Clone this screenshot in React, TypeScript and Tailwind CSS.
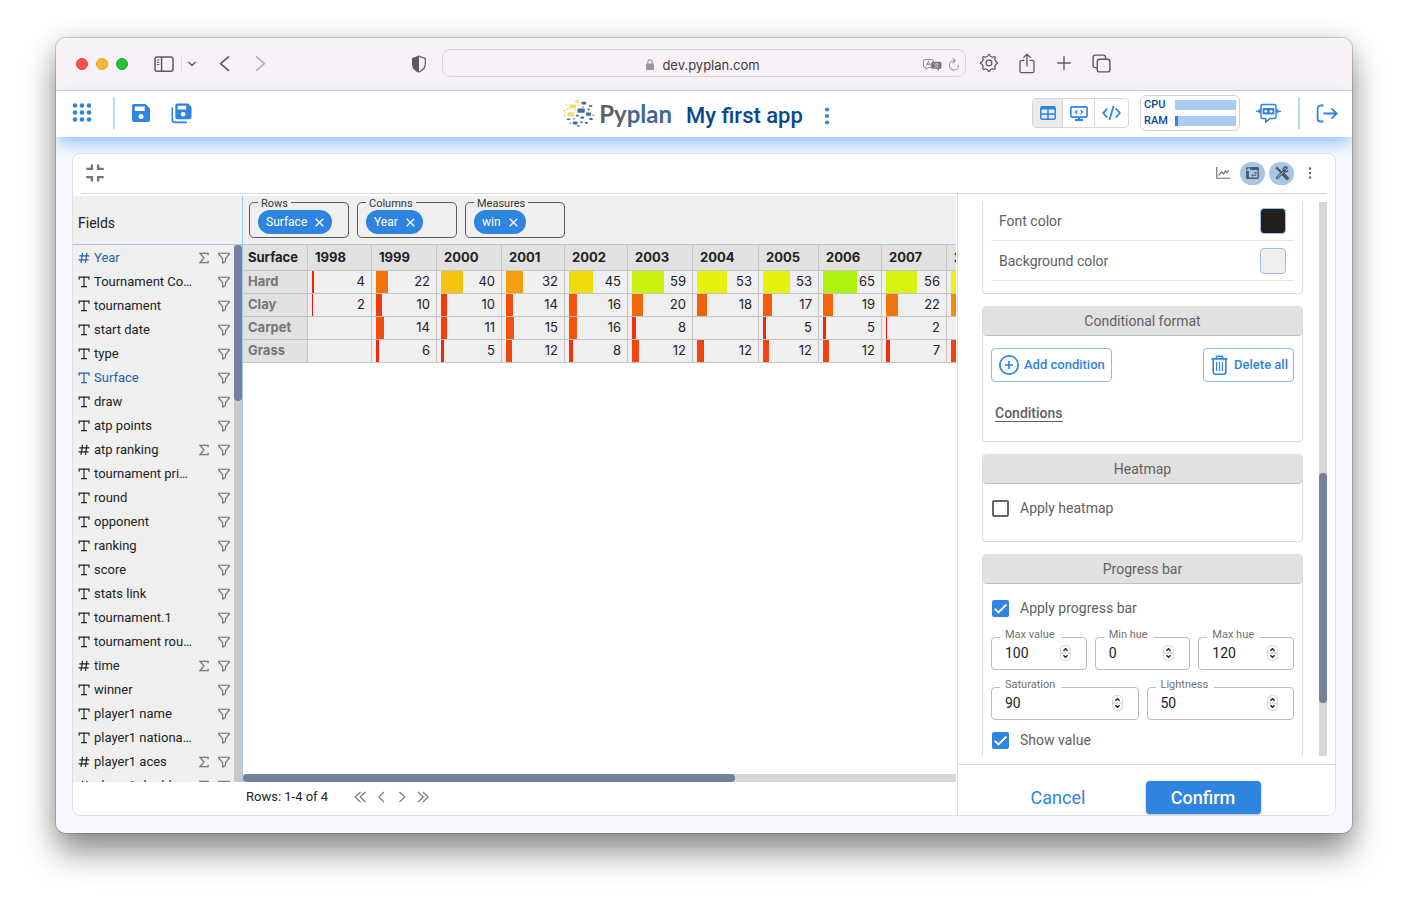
import React from 'react';

const Filter = () => (
  <svg className="h-3 w-3 shrink-0" viewBox="0 0 12 12" fill="none" stroke="#6b6b6b" strokeWidth="1.1" strokeLinejoin="round">
    <path d="M.7 1.2h10.6v.9L7.5 6.6v2.5L4.7 11.2V6.6L.7 2.1z" />
  </svg>
);

const Sigma = () => (
  <svg className="h-3 w-[10px] shrink-0" viewBox="0 0 10 12" fill="none" stroke="#757575" strokeWidth="1.2">
    <path d="M9.2 3.2V1.3H.9L5 6 .9 10.7h8.3V8.8" />
  </svg>
);

const Hash = () => (
  <svg className="h-3 w-3 shrink-0" viewBox="0 0 12 12" fill="none" stroke="currentColor" strokeWidth="1.2">
    <path d="M4.6 .8 3 11M9 .8 7.400 11M1.400 3.800h10M.6 7.900h10" />
  </svg>
);

const TypeT = () => (
  <svg className="h-3 w-3 shrink-0" viewBox="0 0 12 12" fill="none" stroke="currentColor" strokeWidth="1.2">
    <path d="M1.100 3.800V1.100h9.900v2.700M6 1.100v9.500M3 10.600h6" />
  </svg>
);

type Field = { name: string; numeric?: boolean; active?: boolean };

const fields: Field[] = [
  { name: 'Year', numeric: true, active: true },
  { name: 'Tournament Co…' },
  { name: 'tournament' },
  { name: 'start date' },
  { name: 'type' },
  { name: 'Surface', active: true },
  { name: 'draw' },
  { name: 'atp points' },
  { name: 'atp ranking', numeric: true },
  { name: 'tournament pri…' },
  { name: 'round' },
  { name: 'opponent' },
  { name: 'ranking' },
  { name: 'score' },
  { name: 'stats link' },
  { name: 'tournament.1' },
  { name: 'tournament rou…' },
  { name: 'time', numeric: true },
  { name: 'winner' },
  { name: 'player1 name' },
  { name: 'player1 nationa…' },
  { name: 'player1 aces', numeric: true },
  { name: 'player1 doubl…', numeric: true },
];

const years = [1998, 1999, 2000, 2001, 2002, 2003, 2004, 2005, 2006, 2007, 2008];
const colWidths = [65, 64, 65, 65, 63, 63, 65, 66, 60, 63, 65, 65];
const rows: { name: string; values: (number | null)[] }[] = [
  { name: 'Hard', values: [4, 22, 40, 32, 45, 59, 53, 53, 65, 56, 52] },
  { name: 'Clay', values: [2, 10, 10, 14, 16, 20, 18, 17, 19, 22, 28] },
  { name: 'Carpet', values: [null, 14, 11, 15, 16, 8, null, 5, 5, 2, null] },
  { name: 'Grass', values: [null, 6, 5, 12, 8, 12, 12, 12, 12, 7, 12] },
];

function TitleBar() {
  return (
    <div className="flex h-[53px] shrink-0 items-center border-b border-[#d3cdd2] bg-[#f8f1f8] text-[#5f565e]">
      <div className="flex w-[386px] shrink-0 items-center pr-[15px] pl-5">
        <div className="flex gap-2">
          <span className="h-3 w-3 rounded-full border border-[#e0443e] bg-[#ff524c]" />
          <span className="h-3 w-3 rounded-full border border-[#dea123] bg-[#ffb429]" />
          <span className="h-3 w-3 rounded-full border border-[#1aab29] bg-[#26c035]" />
        </div>
        <button aria-label="Sidebar" className="ml-[26px]">
          <svg className="h-4 w-5" viewBox="0 0 20 16" fill="none" stroke="currentColor" strokeWidth="1.5">
            <rect x="1" y=".9" width="18" height="14.3" rx="2" />
            <path d="M7.6 1v14" />
            <path d="M2.8 4h2.6M2.8 6.3h2.6M2.8 8.6h2.6" strokeWidth="1" />
          </svg>
        </button>
        <span className="ml-[7px] h-[18px] w-px bg-[#e5dde5]" />
        <button aria-label="Tab groups" className="ml-[6px]">
          <svg className="h-2 w-2" viewBox="0 0 8 8" fill="none" stroke="currentColor" strokeWidth="1.3" strokeLinecap="round">
            <path d="m.8 2.3 3.2 3.2 3.2-3.2" />
          </svg>
        </button>
        <button aria-label="Back" className="ml-[23px]">
          <svg className="h-4 w-[11px]" viewBox="0 0 11 16" fill="none" stroke="currentColor" strokeWidth="1.6" strokeLinecap="round" strokeLinejoin="round">
            <path d="M9.400 .8 1.600 7.600l7.800 6.800" />
          </svg>
        </button>
        <button aria-label="Forward" className="ml-[25px] text-[#b8b0b7]">
          <svg className="h-4 w-[11px]" viewBox="0 0 11 16" fill="none" stroke="currentColor" strokeWidth="1.6" strokeLinecap="round" strokeLinejoin="round">
            <path d="M1.600 .8 9.400 7.600l-7.800 6.800" />
          </svg>
        </button>
        <button aria-label="Privacy report" className="ml-auto">
          <svg className="h-[18px] w-4" viewBox="0 0 16 18" fill="currentColor">
            <path d="M8 .3C5.600 2 3.400 2.600 1 2.900v6C1 13 3.600 16 8 17.700z" />
            <path d="M8 1c2.200 1.500 4.200 2.100 6.300 2.400V9c0 3.600-2.200 6.300-6.300 8" fill="none" stroke="currentColor" strokeWidth="1.200" />
          </svg>
        </button>
      </div>
      <div className="mb-[2px] flex h-7 flex-1 items-center rounded-lg border border-[#dcd4dc] pt-[3px] pr-[5px] pl-[6px]">
        <span className="w-[34px]" />
        <div className="flex flex-1 items-center justify-center gap-2 font-['Inter',sans-serif] text-[13px] leading-4 text-[#3f393e]">
          <svg className="h-[11px] w-2" viewBox="0 0 8 11">
            <rect x="0" y="4.500" width="8" height="6.500" rx="1" fill="#9b949a" />
            <path d="M1.800 5V3a2.200 2.200 0 0 1 4.400 0v2" fill="none" stroke="#9b949a" strokeWidth="1.100" />
          </svg>
          dev.pyplan.com
        </div>
        <div className="flex items-center gap-[6px]">
          <svg className="h-3 w-[19px]" viewBox="0 0 19 12">
            <path d="M2 .600h6.800a1.500 1.500 0 0 1 1.500 1.500V7a1.500 1.500 0 0 1-1.500 1.500H5L3 10.300V8.500H2A1.500 1.500 0 0 1 .500 7V2.100A1.500 1.500 0 0 1 2 .600z" fill="none" stroke="#8b838a" strokeWidth=".9" />
            <path d="m3.400 6.800 2-4.600 2 4.600M4.100 5.300h2.600" fill="none" stroke="#8b838a" strokeWidth=".9" />
            <path d="M9.700 2.800H17a1.500 1.500 0 0 1 1.500 1.500v4A1.500 1.500 0 0 1 17 9.800h-1v1.900l-2.200-1.900H9.700a1.500 1.500 0 0 1-1.500-1.500v-4a1.500 1.500 0 0 1 1.500-1.500z" fill="#7a7279" />
            <path d="M11 5h5M13.500 3.900v1.200M11.500 8.600c2-.6 3.200-1.800 3.600-3.500M12 5.500c.6 1.600 1.900 2.700 3.500 3.100" fill="none" stroke="#f8f1f8" strokeWidth=".6" />
          </svg>
          <svg className="h-[13px] w-3" viewBox="0 0 12 13" fill="none" stroke="#a39ca2" strokeWidth="1.100" strokeLinecap="round">
            <path d="M6.800 2.700H6A4.600 4.600 0 1 0 10.600 7.400M5 .500l2.400 2.200L5 5" />
          </svg>
        </div>
      </div>
      <div className="flex w-[386px] shrink-0 items-center pb-[2px] pl-[13px]">
        <button aria-label="Settings">
          <svg className="h-5 w-5" viewBox="0 0 24 24" fill="none" stroke="currentColor" strokeWidth="1.500" strokeLinejoin="round">
            <circle cx="12" cy="12" r="3.400" />
            <path d="M10.300 3.900Q12 -.5 13.700 3.900L16.500 5.100Q20.900 3.100 18.900 7.500L20.100 10.300Q24.500 12 20.100 13.700L18.900 16.500Q20.900 20.900 16.500 18.900L13.700 20.100Q12 24.500 10.300 20.100L7.500 18.900Q3.100 20.900 5.100 16.500L3.900 13.700Q-.5 12 3.900 10.300L5.100 7.500Q3.100 3.100 7.500 5.100Z" />
          </svg>
        </button>
        <button aria-label="Share" className="ml-5">
          <svg className="h-[21px] w-4" viewBox="0 0 16 21" fill="none" stroke="currentColor" strokeWidth="1.300" strokeLinecap="round" strokeLinejoin="round">
            <path d="M5 7.300H2.600A1.600 1.600 0 0 0 1 8.900v9.200a1.600 1.600 0 0 0 1.600 1.600h10.800a1.600 1.600 0 0 0 1.600-1.600V8.900a1.600 1.600 0 0 0-1.600-1.600H11M8 13V1.200M4.800 4.200 8 1.100l3.200 3.100" />
          </svg>
        </button>
        <button aria-label="New tab" className="ml-[22px]">
          <svg className="h-[14px] w-[14px]" viewBox="0 0 14 14" fill="none" stroke="currentColor" strokeWidth="1.400" strokeLinecap="round">
            <path d="M7 .800v12.400M.800 7h12.400" />
          </svg>
        </button>
        <button aria-label="Tab overview" className="ml-[21px]">
          <svg className="h-[19px] w-[19px]" viewBox="0 0 19 19" fill="none" stroke="currentColor" strokeWidth="1.400">
            <rect x="5.300" y="5.300" width="12.600" height="12.600" rx="2.200" />
            <path d="M5 13.600H3.300A2.200 2.200 0 0 1 1.100 11.400V3.300a2.200 2.200 0 0 1 2.200-2.200h8.100a2.200 2.200 0 0 1 2.200 2.200V5" />
          </svg>
        </button>
      </div>
    </div>
  );
}

const logoBlocks: [number, number, number, number, string][] = [
  [40, 4, 12, 7, '#f1da66'], [23, 17, 19, 12, '#f1da66'], [10, 16, 8, 4, '#f4e38a'], [13, 28, 8, 5, '#f1da66'],
  [47, 17, 8, 5, '#f1da66'], [2, 33, 10, 5, '#f1da66'], [17, 40, 20, 13, '#f1da66'], [3, 48, 8, 5, '#f4e38a'],
  [37, 31, 7, 5, '#f4e38a'], [59, 8, 14, 9, '#44689b'], [82, 19, 10, 5, '#44689b'], [60, 22, 7, 4, '#7f99bd'],
  [47, 29, 22, 13, '#44689b'], [77, 29, 7, 5, '#44689b'], [42, 48, 9, 5, '#44689b'], [73, 41, 15, 10, '#44689b'],
  [91, 47, 7, 4, '#7f99bd'], [15, 59, 10, 5, '#44689b'], [33, 57, 7, 5, '#7f99bd'], [56, 53, 11, 7, '#44689b'],
  [83, 58, 10, 6, '#44689b'], [33, 68, 14, 9, '#44689b'], [22, 72, 7, 4, '#7f99bd'], [55, 68, 8, 5, '#44689b'],
  [69, 70, 10, 5, '#44689b'], [46, 80, 8, 4, '#44689b'],
];

function AppHeader() {
  return (
    <header className="relative z-10 flex h-[46px] shrink-0 items-center bg-white pr-[18px] pb-[2px] pl-4 text-[#2e84de] shadow-[0_8px_16px_-2px_rgba(120,182,244,0.85)]">
      <div className="flex flex-1 items-center">
        <button aria-label="Applications">
          <svg className="h-5 w-5" viewBox="0 0 20 20" fill="currentColor">
            {[3, 10, 17].map((y) => [3, 10, 17].map((x) => <circle key={`${x}-${y}`} cx={x} cy={y - 0.5} r="2.300" />))}
          </svg>
        </button>
        <span className="ml-[21px] h-8 w-[2px] bg-[#b9dafa]" />
        <button aria-label="Save" className="ml-[17px]">
          <svg className="h-[18px] w-[18px]" viewBox="0 0 18 18">
            <path d="M2 0h11.500L18 4.500V16a2 2 0 0 1-2 2H2a2 2 0 0 1-2-2V2a2 2 0 0 1 2-2z" fill="currentColor" />
            <path d="M2.800 2.600h9.900v4.400H2.800z" fill="#fff" />
            <circle cx="9" cy="12.500" r="2.500" fill="#fff" />
          </svg>
        </button>
        <button aria-label="Save as" className="ml-[21px]">
          <svg className="h-[21px] w-[21px]" viewBox="0 0 21 21">
            <path d="M6.300 .500h11L20.500 4v10.200a2 2 0 0 1-2 2H6.300a2 2 0 0 1-2-2V2.500a2 2 0 0 1 2-2z" fill="currentColor" />
            <path d="M6.700 2.800h8.500v3.600H6.700z" fill="#fff" />
            <circle cx="12.200" cy="11.300" r="2.300" fill="#fff" />
            <path d="M1.300 4.500V17a2.400 2.400 0 0 0 2.400 2.400H16" fill="none" stroke="currentColor" strokeWidth="1.600" />
          </svg>
        </button>
      </div>
      <div className="mr-[14px] flex items-center">
        <svg className="h-[29px] w-[33px]" viewBox="0 0 100 88">
          {logoBlocks.map(([x, y, w, h, c], i) => (
            <rect key={i} x={x} y={y} width={w} height={h} rx="2" fill={c} />
          ))}
        </svg>
        <span className="ml-1 pt-px font-['Lato',sans-serif] text-2xl font-bold text-[#5d5f62]">
          Py<span className="text-[#436795]">plan</span>
        </span>
        <h1 className="ml-[14px] pt-[6px] text-[22px] leading-7 font-medium text-[#06498f]">My first app</h1>
        <button aria-label="Application menu" className="ml-[21px] pt-[5px]">
          <svg className="h-[18px] w-[6px]" viewBox="0 0 6 18" fill="currentColor">
            <circle cx="3" cy="2.500" r="2.100" />
            <circle cx="3" cy="9" r="2.100" />
            <circle cx="3" cy="15.500" r="2.100" />
          </svg>
        </button>
      </div>
      <div className="flex flex-1 items-center justify-end">
        <div className="flex h-[30px] overflow-hidden rounded-[4px] border border-[#d6d6d6]">
          <button aria-label="Table view" className="flex w-[29px] items-center justify-center bg-[#ebebeb]">
            <svg className="h-[14px] w-4" viewBox="0 0 16 14" fill="none" stroke="currentColor" strokeWidth="1.500">
              <rect x=".8" y=".8" width="14.400" height="12.400" rx="1.500" />
              <path d="M1 2.200h14" strokeWidth="2.500" />
              <path d="M1 8h14M8 3v10" />
            </svg>
          </button>
          <button aria-label="Interface view" className="flex w-8 items-center justify-center border-l border-[#d6d6d6]">
            <svg className="h-[15px] w-[18px]" viewBox="0 0 18 15" fill="none" stroke="currentColor" strokeWidth="1.600">
              <rect x=".9" y=".9" width="16.200" height="10.200" rx="1" />
              <path d="M9 11v3M5 14h8" strokeWidth="2" />
              <path d="m7.400 4.200-2 1.900 2 1.900M10.600 4.200l2 1.900-2 1.900" strokeWidth="1.200" />
            </svg>
          </button>
          <button aria-label="Code view" className="flex w-[34px] items-center justify-center border-l border-[#d6d6d6]">
            <svg className="h-4 w-[19px]" viewBox="0 0 19 16" fill="none" stroke="currentColor" strokeWidth="1.800">
              <path d="M5.300 3.500 1.200 8l4.100 4.500M13.700 3.500 17.800 8l-4.100 4.500M11.600 1 7.400 15" />
            </svg>
          </button>
        </div>
        <div className="ml-[11px] flex h-9 w-[100px] flex-col justify-center rounded-md border border-[#cfd1d4] px-[3px] text-[11px] leading-4 font-medium text-[#06498f]">
          <div className="flex items-center justify-between">
            CPU
            <span className="h-[10px] w-[61px] bg-[#a9ccf1]" />
          </div>
          <div className="flex items-center justify-between">
            RAM
            <span className="flex h-[10px] w-[61px] bg-[#a9ccf1]">
              <span className="w-[5%] bg-[#2e84de]" />
            </span>
          </div>
        </div>
        <button aria-label="Assistant" className="ml-4">
          <svg className="h-[21px] w-[25px]" viewBox="0 0 25 21" fill="none" stroke="currentColor">
            <path d="M6.400 1.500h12.200a1.400 1.400 0 0 1 1.400 1.400v11.300a1.400 1.400 0 0 1-1.400 1.400h-4.800l-4 3.600v-3.600H6.400A1.400 1.400 0 0 1 5 14.200V2.900a1.400 1.400 0 0 1 1.400-1.400z" strokeWidth="1.500" strokeLinejoin="round" />
            <rect x="6.600" y="5" width="11.800" height="6.600" rx="1.300" fill="currentColor" stroke="none" />
            <circle cx="9.800" cy="8.300" r="1.400" fill="#fff" stroke="none" />
            <circle cx="15.200" cy="8.300" r="1.400" fill="#fff" stroke="none" />
            <path d="M0 8.300h5M20 8.300h5" strokeWidth="1.300" />
            <path d="M3.300 6.300v4M21.700 6.300v4" strokeWidth="1.500" />
          </svg>
        </button>
        <span className="ml-[17px] h-8 w-[2px] bg-[#b9dafa]" />
        <button aria-label="Log out" className="ml-4 -mr-1">
          <svg className="h-[19px] w-[22px]" viewBox="0 0 22 19" fill="none" stroke="currentColor" strokeWidth="1.800">
            <path d="M7.500 1.500H4.600a3 3 0 0 0-3 3v10a3 3 0 0 0 3 3h2.900M7.500 9.500h13M15.500 4.300l5.200 5.200-5.200 5.200" />
          </svg>
        </button>
      </div>
    </header>
  );
}

function CardToolbar() {
  return (
    <div className="mx-2 flex h-10 shrink-0 items-center border-b border-[#d6d6d6] pr-[15px] pb-px pl-1 text-[#4c5a6a]">
      <button aria-label="Exit full screen">
        <svg className="h-5 w-5" viewBox="0 0 20 20" fill="none" stroke="#757575" strokeWidth="2.400">
          <path d="M6.900 1.400v4.500H1.300M13.100 1.400v4.500h5.600M6.900 18.600v-4.500H1.300M13.100 18.600v-4.500h5.600" />
        </svg>
      </button>
      <button aria-label="Chart" className="ml-auto">
        <svg className="h-3 w-[14px]" viewBox="0 0 14 12" fill="none" stroke="#666" strokeWidth="1.100">
          <path d="M.8 0v11.300H14M2.800 8.300l2.800-3.500 1.900 2 2-2.800 1.500 1.700L13 3" />
        </svg>
      </button>
      <button aria-label="Pivot table" className="ml-[10px] flex h-[23px] w-[25px] items-center justify-center rounded-full bg-[#a6c6e6]">
        <svg className="h-3 w-[13px]" viewBox="0 0 13 12" fill="none" stroke="currentColor">
          <rect x=".8" y=".8" width="11.400" height="10.400" rx="1" strokeWidth="1.400" />
          <path d="M4 1.700h8.500" strokeWidth="2.400" />
          <path d="M1.700 4v7.500" strokeWidth="2.400" />
          <path d="M3.300 0v3.300H0" strokeWidth=".7" stroke="#a6c6e6" />
          <path d="M9.700 5v3.400H5.900M7.300 7 5.800 8.400l1.500 1.400M8.700 6l1-1.100 1 1.100" strokeWidth=".9" />
        </svg>
      </button>
      <button aria-label="Format options" className="ml-1 flex h-[23px] w-[25px] items-center justify-center rounded-full bg-[#a6c6e6]">
        <svg className="h-[14px] w-[14px]" viewBox="0 0 14 14" fill="none" stroke="currentColor">
          <path d="M1.300 1.300 7 7" strokeWidth="2.400" />
          <path d="m8 8 4.200 4.200" strokeWidth="3.400" strokeLinecap="round" />
          <path d="m2.300 11.800 7.400-7.500" strokeWidth="2.800" strokeLinecap="round" />
          <path d="m2.500 11.600 6-6" strokeWidth="1" stroke="#a6c6e6" strokeLinecap="round" />
          <path d="M11.600 1.100A2.400 2.400 0 1 0 13 4.300M11 3l1.800-1.600" strokeWidth="1.500" />
        </svg>
      </button>
      <button aria-label="More" className="ml-[14px]">
        <svg className="h-3 w-1" viewBox="0 0 4 12" fill="#666">
          <circle cx="2" cy="1.500" r="1.200" />
          <circle cx="2" cy="6" r="1.200" />
          <circle cx="2" cy="10.500" r="1.200" />
        </svg>
      </button>
    </div>
  );
}

function FieldList() {
  return (
    <aside className="flex w-[170px] shrink-0 flex-col border-r border-[#9cc7f0] bg-[#efefef]">
      <h2 className="flex h-[49px] shrink-0 items-center border-b border-[#9cc7f0] pt-[5px] pl-[5px] text-sm text-[#222]">Fields</h2>
      <div className="flex min-h-0 flex-1">
        <ul className="h-full min-w-0 flex-1 overflow-hidden pt-px pr-1 pl-[5px] text-[13px]">
          {fields.map((f) => (
            <li key={f.name} className={`flex h-6 items-center ${f.active ? 'text-[#28619f]' : 'text-[#222]'}`}>
              {f.numeric ? <Hash /> : <TypeT />}
              <span className="ml-1 flex-1 whitespace-nowrap">{f.name}</span>
              {f.numeric && (
                <button aria-label={`Aggregate ${f.name}`} className="mr-[9px]">
                  <Sigma />
                </button>
              )}
              <button aria-label={`Filter ${f.name}`}>
                <Filter />
              </button>
            </li>
          ))}
        </ul>
        <div className="w-2 shrink-0 bg-[#c9c9c9]">
          <div className="h-[29%] rounded-full bg-[#75819c]" />
        </div>
      </div>
    </aside>
  );
}

function DropZone({ title, chip }: { title: string; chip: string }) {
  return (
    <fieldset className="h-[41px] w-[100px] rounded-[5px] border border-[#5a5a5a] pl-2">
      <legend className="h-[11px] px-[3px] text-[11px] leading-[13px] text-[#333]">{title}</legend>
      <span className="mt-[2px] inline-flex h-6 items-center gap-2 rounded-full bg-[#2e84de] px-2 text-xs whitespace-nowrap text-white">
        {chip}
        <button aria-label={`Remove ${chip}`}>
          <svg className="h-[9px] w-[9px]" viewBox="0 0 9 9" stroke="#fff" strokeWidth="1.300">
            <path d="m.7.7 7.600 7.600M8.300.7.700 8.300" />
          </svg>
        </button>
      </span>
    </fieldset>
  );
}

function PivotTable() {
  return (
    <main className="flex min-w-0 flex-1 flex-col bg-white pr-px">
      <div className="flex h-[49px] shrink-0 items-start gap-2 border-b border-[#c4c4c4] bg-[#efefef] pt-px pl-[6px]">
        <DropZone title="Rows" chip="Surface" />
        <DropZone title="Columns" chip="Year" />
        <DropZone title="Measures" chip="win" />
      </div>
      <div className="min-h-0 flex-1 overflow-hidden font-['Inter',sans-serif] text-[13px] text-[#222]">
        <table className="w-[769px] table-fixed border-separate border-spacing-0">
          <colgroup>
            {colWidths.map((w, i) => (
              <col key={i} style={{ width: w }} />
            ))}
          </colgroup>
          <thead>
            <tr className="h-[26px] bg-[#e1e1e1] text-left">
              <th className="border-r border-b border-[#c4c4c4] p-0 pl-[5px] font-bold">Surface</th>
              {years.map((y) => (
                <th key={y} className="border-r border-b border-[#c4c4c4] p-0 pl-[7px] font-bold">{y}</th>
              ))}
            </tr>
          </thead>
          <tbody>
            {rows.map((r) => (
              <tr key={r.name} className="h-[23px] bg-[#efefef]">
                <th className="border-r border-b border-[#c4c4c4] bg-[#e1e1e1] p-0 pb-[2px] pl-[5px] text-left leading-[20px] font-bold text-[#757575]">{r.name}</th>
                {r.values.map((v, i) => (
                  <td key={years[i]} className="border-r border-b border-[#c4c4c4] p-0 pr-[5px] pl-1">
                    {v !== null && (
                      <div className="grid h-[22px]">
                        <span
                          className="col-start-1 row-start-1"
                          style={{ width: `${v}%`, backgroundColor: `hsl(${v * 1.2} 90% 50%)` }}
                        />
                        <span className="col-start-1 row-start-1 pr-px text-right leading-[20px]">{v}</span>
                      </div>
                    )}
                  </td>
                ))}
              </tr>
            ))}
          </tbody>
        </table>
      </div>
      <div className="h-2 shrink-0 bg-[#d6d6d6]">
        <div className="h-2 w-[69%] rounded-full bg-[#75819c]" />
      </div>
    </main>
  );
}

function Pager() {
  const icons: [string, string][] = [
    ['First page', 'M6.500 1 1.200 6l5.300 5M11.500 1 6.200 6l5.300 5'],
    ['Previous page', 'M9 1 3.700 6 9 11'],
    ['Next page', 'M3.500 1l5.300 5-5.300 5'],
    ['Last page', 'M1 1l5.300 5L1 11M6 1l5.300 5L6 11'],
  ];
  return (
    <div className="flex h-[33px] shrink-0 items-center pb-[3px] pl-[173px] text-[13px] text-[#222]">
      <span className="mr-[26px]">Rows: 1-4 of 4</span>
      <div className="flex gap-[9px]">
        {icons.map(([label, d]) => (
          <button key={label} aria-label={label}>
            <svg className="h-3 w-3" viewBox="0 0 12 12" fill="none" stroke="#757575" strokeWidth="1.100">
              <path d={d} />
            </svg>
          </button>
        ))}
      </div>
    </div>
  );
}

function Section({ title, children }: { title: string; children: React.ReactNode }) {
  return (
    <section className="mt-3 rounded-[4px] border border-[#dcdcdc] border-t-[#e1e1e1]">
      <h3 className="flex h-[29px] items-center justify-center rounded-[4px] border-b border-[#c0c0c0] bg-[#e1e1e1] text-sm text-[#616161]">{title}</h3>
      <div className="px-2">{children}</div>
    </section>
  );
}

function Check({ id, label, checked }: { id: string; label: string; checked?: boolean }) {
  return (
    <div className="flex items-center gap-[11px] pl-px text-sm leading-5 text-[#616161]">
      <span className="grid h-[17px] w-[17px] shrink-0">
        <input
          id={id}
          type="checkbox"
          defaultChecked={checked}
          className="peer col-start-1 row-start-1 h-[17px] w-[17px] appearance-none rounded-[2px] border-2 border-[#666] checked:border-[#2e84de] checked:bg-[#2e84de]"
        />
        <svg className="pointer-events-none invisible col-start-1 row-start-1 h-[17px] w-[17px] peer-checked:visible" viewBox="0 0 17 17" fill="none" stroke="#fff" strokeWidth="1.900">
          <path d="m2.700 8.800 3.800 3.700L14.400 4.500" />
        </svg>
      </span>
      <label htmlFor={id}>{label}</label>
    </div>
  );
}

function NumberField({ id, label, value }: { id: string; label: string; value: number }) {
  return (
    <fieldset className="h-[41px] min-w-0 rounded-[4px] border border-[#bdbdbd] pr-[15px] pl-[9px]">
      <legend className="-ml-px h-4 pr-[6px] pl-[5px] text-[11px] leading-[12px] text-[#707070]">
        <label htmlFor={id}>{label}</label>
      </legend>
      <div className="flex h-4 items-center pl-1">
        <input
          id={id}
          type="number"
          defaultValue={value}
          className="w-0 min-w-0 flex-1 [appearance:textfield] bg-transparent text-sm leading-4 text-[#222] outline-none [&::-webkit-inner-spin-button]:appearance-none"
        />
        <svg className="h-4 w-[11px] shrink-0" viewBox="0 0 11 16" fill="none">
          <rect x=".5" y=".7" width="10" height="14.600" rx="3.500" fill="#fff" stroke="#d2d2d2" strokeWidth=".9" />
          <path d="M.5 8h10" stroke="#c4c4c4" />
          <path d="M3.400 5.700 5.500 3.800l2.100 1.900M3.400 10.300l2.100 1.900 2.100-1.900" stroke="#222" strokeWidth="1.400" />
        </svg>
      </div>
    </fieldset>
  );
}

function FormatPanel() {
  return (
    <aside className="flex w-[378px] shrink-0 flex-col border-l border-[#dcdcdc] bg-white pt-2">
      <div className="flex min-h-0 flex-1 pr-2 pl-6">
        <div className="mr-4 h-full flex-1 overflow-hidden">
          <section className="rounded-b-[4px] border border-t-0 border-[#dcdcdc] px-2 pb-3 text-sm text-[#616161]">
            <div className="flex h-[39px] items-center justify-between border-b border-[#e1e8f2] px-2">
              <label htmlFor="font-color">Font color</label>
              <button id="font-color" className="h-[26px] w-[26px] rounded-[4px] border border-[#9ec0e6] bg-[#202020]" />
            </div>
            <div className="flex h-10 items-center justify-between border-b border-[#e1e8f2] px-2">
              <label htmlFor="background-color">Background color</label>
              <button id="background-color" className="h-[26px] w-[26px] rounded-[4px] border border-[#9ec0e6] bg-[#efefef]" />
            </div>
          </section>
          <Section title="Conditional format">
            <div className="flex justify-between pt-3">
              <button className="flex h-[34px] items-center gap-1 rounded-[4px] border border-[#8abbee] px-[6px] text-[13px] font-medium text-[#2e84de]">
                <svg className="h-[22px] w-[22px]" viewBox="0 0 22 22" fill="none" stroke="currentColor" strokeWidth="1.700">
                  <circle cx="11" cy="11" r="9.200" />
                  <path d="M11 7v8M7 11h8" />
                </svg>
                Add condition
              </button>
              <button className="flex h-[34px] items-center gap-1 rounded-[4px] border border-[#8abbee] px-[5px] text-[13px] font-medium text-[#2e84de]">
                <svg className="h-[22px] w-[21px]" viewBox="0 0 21 22" fill="none" stroke="currentColor" strokeWidth="1.600">
                  <path d="M2.500 4.900h16M4.200 5v13a2.200 2.200 0 0 0 2.200 2.200h8.200a2.200 2.200 0 0 0 2.200-2.200V5M6.800 4.700l1.100-2.500h5.200l1.100 2.500" />
                  <path d="M7.600 8v9M10.500 8v9M13.400 8v9" strokeWidth="1.200" />
                </svg>
                Delete all
              </button>
            </div>
            <h4 className="mt-6 mb-[19px] ml-1 inline-block border-b border-[#616161] text-sm leading-[15px] font-medium text-[#616161]">Conditions</h4>
          </Section>
          <Section title="Heatmap">
            <div className="pt-[14px] pb-[23px]">
              <Check id="heatmap" label="Apply heatmap" />
            </div>
          </Section>
          <Section title="Progress bar">
            <div className="pt-[14px]">
              <Check id="progress" label="Apply progress bar" checked />
            </div>
            <div className="mt-[11px] grid grid-cols-3 gap-2">
              <NumberField id="max-value" label="Max value" value={100} />
              <NumberField id="min-hue" label="Min hue" value={0} />
              <NumberField id="max-hue" label="Max hue" value={120} />
            </div>
            <div className="mt-[9px] grid grid-cols-2 gap-2">
              <NumberField id="saturation" label="Saturation" value={90} />
              <NumberField id="lightness" label="Lightness" value={50} />
            </div>
            <div className="pt-[10px] pb-8">
              <Check id="show-value" label="Show value" checked />
            </div>
          </Section>
        </div>
        <div className="w-2 shrink-0 bg-[#d6d6d6]">
          <div className="h-[49%]" />
          <div className="h-[41.5%] rounded-full bg-[#75819c]" />
        </div>
      </div>
      <div className="mt-2 flex h-[51px] shrink-0 items-start justify-center gap-[30px] border-t border-[#dcdcdc] pt-4 pr-8 text-lg">
        <button className="h-[33px] w-[115px] rounded-[4px] text-[#2e84de]">Cancel</button>
        <button className="h-[33px] w-[115px] rounded-[4px] bg-[#2e84de] font-medium text-white shadow-[0_1px_3px_rgba(0,0,0,0.3)]">Confirm</button>
      </div>
    </aside>
  );
}

export default function App() {
  return (
    <div className="flex h-screen flex-col overflow-hidden bg-white px-14 pt-[38px] pb-[74px] font-['Roboto',sans-serif]">
      <div className="flex min-h-0 flex-1 flex-col rounded-[10px] shadow-[0_0_0_1px_rgba(0,0,0,0.16),0_20px_32px_rgba(0,0,0,0.42),0_0_24px_rgba(0,0,0,0.14)]">
        <div className="flex min-h-0 flex-1 flex-col overflow-hidden rounded-[10px] bg-[#f7f9ff]">
          <TitleBar />
          <AppHeader />
          <div className="flex min-h-0 flex-1 flex-col px-4 pt-4 pb-[17px]">
            <div className="relative z-20 flex min-h-0 flex-1 flex-col overflow-hidden rounded-lg border border-[#dcdee2] bg-white">
              <CardToolbar />
              <div className="flex min-h-0 flex-1">
                <div className="flex min-w-0 flex-1 flex-col pt-[2px]">
                  <div className="flex min-h-0 flex-1">
                    <FieldList />
                    <PivotTable />
                  </div>
                  <Pager />
                </div>
                <FormatPanel />
              </div>
            </div>
          </div>
        </div>
      </div>
    </div>
  );
}
